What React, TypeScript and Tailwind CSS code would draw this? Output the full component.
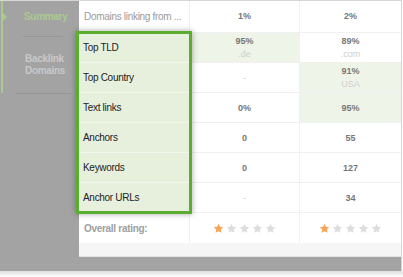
import React from "react";

type Cell = { main: string; sub?: string; hl?: boolean; muted?: boolean };

const ROWS: { label: string; a: Cell; b: Cell }[] = [
  { label: "Top TLD", a: { main: "95%", sub: ".de", hl: true }, b: { main: "89%", sub: ".com" } },
  { label: "Top Country", a: { main: "-", muted: true }, b: { main: "91%", sub: "USA", hl: true } },
  { label: "Text links", a: { main: "0%" }, b: { main: "95%", hl: true } },
  { label: "Anchors", a: { main: "0" }, b: { main: "55" } },
  { label: "Keywords", a: { main: "0" }, b: { main: "127" } },
  { label: "Anchor URLs", a: { main: "-", muted: true }, b: { main: "34" } },
];

function Star({ on }: { on?: boolean }) {
  return (
    <svg width="11" height="11" viewBox="0 0 24 24">
      <path
        d="M12 1.8l3.1 6.6 7.2.9-5.3 5 1.4 7.1L12 17.9l-6.4 3.5 1.4-7.1-5.3-5 7.2-.9z"
        fill={on ? "#f7a45c" : "#dddddd"}
      />
    </svg>
  );
}

function Rating() {
  return (
    <div className="flex items-center justify-center gap-[2px]">
      <Star on />
      <Star />
      <Star />
      <Star />
      <Star />
    </div>
  );
}

function ValueCell({ cell, last }: { cell: Cell; last?: boolean }) {
  return (
    <div
      className={`flex flex-col items-center justify-center border-b border-[#f0f0f0] ${
        last ? "" : "border-r"
      } ${cell.hl ? "bg-[#eef5e8]" : "bg-white"}`}
    >
      <span
        className={`text-[9px] leading-[12px] ${
          cell.muted ? "text-[#cccccc] font-normal" : "text-[#777777] font-bold"
        }`}
      >
        {cell.main}
      </span>
      {cell.sub && <span className="text-[9px] leading-[14px] text-[#cfcfcf]">{cell.sub}</span>}
    </div>
  );
}

export default function App() {
  return (
    <div
      className="relative w-[403px] h-[277px] bg-white overflow-hidden"
      style={{ fontFamily: '"Liberation Sans", Arial, sans-serif' }}
    >
      <div className="flex w-[402px] h-[271px] bg-[#a3a3a3] border-t border-r border-[#d6d6d6]">
        {/* sidebar */}
        <aside className="w-[79px] shrink-0">
          <div className="relative ml-[1px] h-[92px] border-l-2 border-[#a9c98f]">
            <div className="absolute left-0 top-[12px] w-0 h-0 border-y-[4px] border-y-transparent border-l-[4px] border-l-[#a9c98f]" />
            <div className="pt-[9px] pl-[21px] text-[10px] font-bold leading-[14px] text-[#a8cb8b] tracking-[-0.3px]">
              Summary
            </div>
            <div className="ml-[20px] mt-[12px] w-[40px] h-px bg-[#969696]" />
            <div className="pl-[22px] mt-[16px] text-[10px] font-bold leading-[12px] text-[#c9c9c9] tracking-[-0.3px]">
              Backlink
              <br />
              Domains
            </div>
          </div>
          <div className="ml-[16px] w-[55px] h-px bg-[#969696]" />
        </aside>

        {/* table */}
        <div className="flex flex-col w-[322px] h-[256px] bg-white text-[10px]">
          <div className="grid grid-cols-[111px_110px_101px] h-[32px]">
            <div className="flex items-center pl-[5px] border-b border-r border-[#f0f0f0] text-[#9a9a9a] tracking-[-0.3px] whitespace-nowrap">
              Domains linking from ...
            </div>
            <div className="flex items-center justify-center border-b border-r border-[#f0f0f0] text-[9px] font-bold text-[#777777]">
              1%
            </div>
            <div className="flex items-center justify-center border-b border-[#f0f0f0] text-[9px] font-bold text-[#777777]">
              2%
            </div>
          </div>
          {ROWS.map((r) => (
            <div key={r.label} className="grid grid-cols-[111px_110px_101px] h-[30px]">
              <div className="flex items-center pl-[4px] bg-[#e6f0dd] border-b border-[#f1f6ec] text-[#222222] tracking-[-0.3px]">
                {r.label}
              </div>
              <ValueCell cell={r.a} />
              <ValueCell cell={r.b} last />
            </div>
          ))}
          <div className="grid grid-cols-[111px_110px_101px] h-[30px]">
            <div className="flex items-center pl-[5px] border-r border-[#f0f0f0] font-bold text-[#a0a0a0] tracking-[-0.3px]">
              Overall rating:
            </div>
            <div className="flex items-center justify-center border-r border-[#f0f0f0]">
              <Rating />
            </div>
            <div className="flex items-center justify-center">
              <Rating />
            </div>
          </div>
          <div className="flex-1 bg-[#f6f6f6] border-b border-[#e2e2e2]" />
        </div>
      </div>
      <div className="h-[6px] bg-gradient-to-b from-[#dedede] to-white" />

      {/* highlight box */}
      <div className="pointer-events-none absolute left-[76px] top-[31px] w-[116px] h-[183px] border-[3px] border-[#5aad2f] shadow-[0_0_6px_rgba(0,0,0,0.35)]" />
    </div>
  );
}
